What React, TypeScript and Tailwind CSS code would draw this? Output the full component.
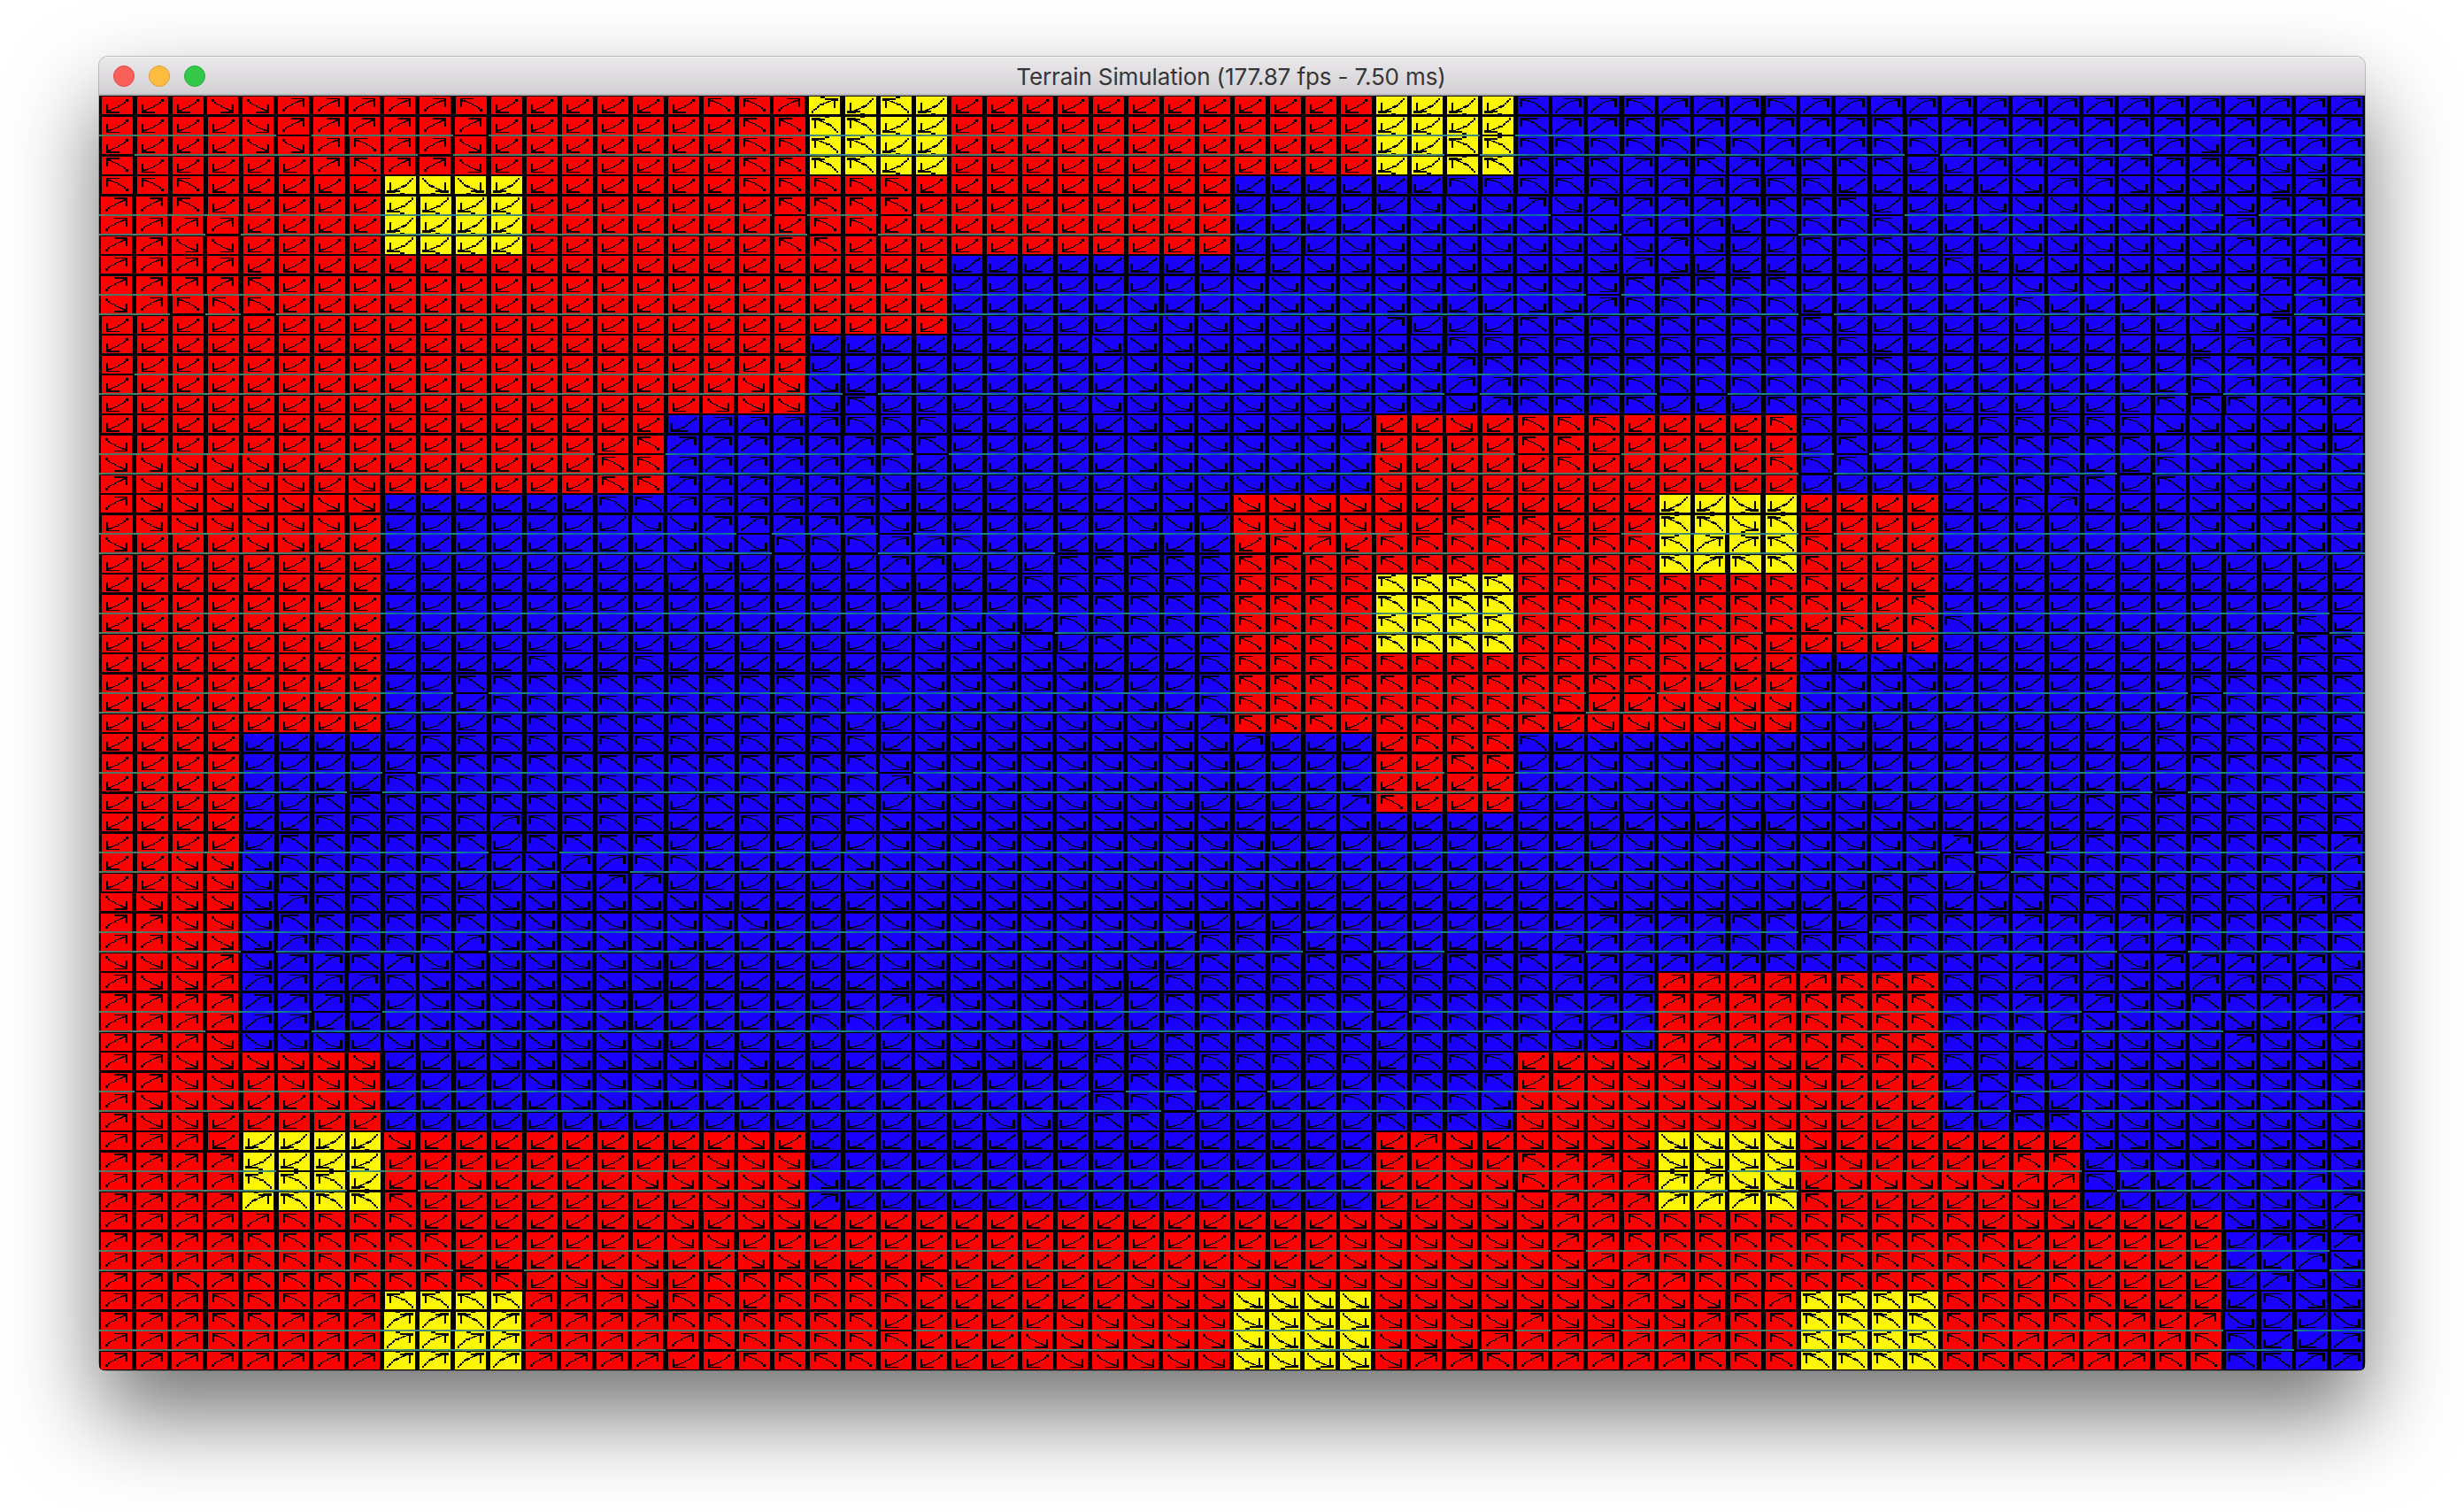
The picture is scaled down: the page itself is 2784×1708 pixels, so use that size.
import React from "react";

const CELL_W = 40;
const CELL_H = 22.5;

const TERRAIN = [
  "RRRRRYRRRYBBBBBB",
  "RRYRRRRRBBBBBBBB",
  "RRRRRRBBBBBBBBBB",
  "RRRRRBBBBBBBBBBB",
  "RRRRBBBBBRRRBBBB",
  "RRBBBBBBRRRYRBBB",
  "RRBBBBBBRYRRRBBB",
  "RRBBBBBBRRRRBBBB",
  "RBBBBBBBBRBBBBBB",
  "RBBBBBBBBBBBBBBB",
  "RBBBBBBBBBBBBBBB",
  "RBBBBBBBBBBRRBBB",
  "RRBBBBBBBBRRRBBB",
  "RYRRRBBBBRRYRRBB",
  "RRRRRRRRRRRRRRRB",
  "RRYRRRRRYRRRYRRB",
];

// Run-length flow directions: L down-left, R down-right, q up-left, p up-right.
const FLOW = [
  "3L2R5pq6L2q2pLqL8L 8Lq2pq3pq16p",
  "4LR6p7L4q10L 8Lq2p2q5p2q12p",
  "4L2Rpq2pR7L4q10L 6L9q3p2q7pR4p",
  "q5Lpq2pR7L4q10L 6L5q2pq2p3q2L8p2Rp",
  "3q6L2R7L5q9L 6L5q4p2q5LR2p5R2p",
  "2pq16L4q9L 5L3RpR5p3q3L8R3p",
  "4p16L2q10L 4L7R3pL4q3L6R4p",
  "2p2R15L2q11L 3L9RpR2L3q3L6R4p",
  "4p28L 2L9RpR7Lq2L6R3p",
  "4pq27L 11R5q6L7R3p",
  "Rp3q24LR2L 6R2L2Rp5q6Lq4L3R2p",
  "29L3R 4Rp3L9q10L2R3p",
  "28L4R 6R12q10L4p",
  "29L3R 6Rp12q8Lq4p",
  "18L3R8L3R 6R2p11q8Lq4p",
  "17L4Rq6L4R 7Rp4q3L4q7L3q3p",
  "17L4p3q5L3R 3R3LRL3q4L3q3L5q5RL",
  "R14Lq6p2q5L3R 4R4L2q7Lq3L5qL4RL",
  "5R9L2q6pq6L3R 5R4Lq5L3q3L3q2Lq5R",
  "p5RLR6L2q6pR6L3R 5R16L4qLq5R",
  "p7R6L2q6pR6L3R 5R9LR7Lqp3L5R",
  "L6R8L2R5pR6L2RL 5RL3q3L2qRq11L5R",
  "R3L2R10L3R3q2pq4LR2L LqpL9q2p2q10L5R",
  "16L2R4L2p3L5q 13qp3q15L",
  "22LR3L6q 17q15L",
  "26L6q 17q2Lq12L",
  "24L2RL5q 16qLqL2q9LqL",
  "23L4RL4q 15q15L2q",
  "12Lq2Lq7L5R3Lq 13q3LRL2R9L3q",
  "10L13q5R3Lq 12q4L4R7L5q",
  "11L11qL7RLq 10q2L7R8L5q",
  "11L10q2L8Rp 3qL5qL8R9L5q",
  "9L13qL9R p4L4qL8R8L6q",
  "9L13q10R 6L2q2L7R10L5q",
  "8L14qp9R 10L7R10L5q",
  "6L10qL5qL8RL 3Lpq5L8R6L8q",
  "6L5qp4q2L4q10R 3LR8LRLRL4R5L7q",
  "5L6qL4q6L10R R10L9Rp3L7qp",
  "2L3R5q2LR2p2q4L11R 2R9L9R11qp",
  "2L3R5q2L2R2p5L11R 2R8L8R2q2L8qpR",
  "5Rp5q7R4L10R 2R8L6R2L2qL2R6q3p",
  "2p3R6q8R3L9RL 10L4p2q2L3q6p5q",
  "2p3Rp4qp6R5L8RLq 2qLq5L5p7q6p5q",
  "3RpR2pqp7R6L8RLq 4q2L3q6p7q2p2R5pR",
  "p2R5pq7R6L7RL2q 9q8p5q3p2R2p3q",
  "7pqL6R7L2p4R2L2q 4qL5q6p6q3p2R2q3p",
  "6p3L6R5L2qp5R2L2q 3q2L4q7p7qp6R2p",
  "3p4RL8R7L4R3L2q 4qL4q3R4p7q5Rp3R",
  "2p6R3L8R4L3R2L4q 4qL3q2L2Rp3RL5qL9R",
  "2p2RL3R4L7R10L3q q3L4q2L7R4L2qL8R",
  "p3R2L2R5L3R12L3qL 3L4q10R5LqL8R",
  "p2R22L2RL2q2L 4L3q10R5L2q8R",
  "3p5LR9LR13L 5LpRL9R7L8R",
  "4p13L3R12L 6LRLq2p7R4L2qL7R",
  "4p3q3LR4L6R11L 6L2Rq5p2RL5R2pq3L2RpR",
  "5p4q8L3Rp11L 6L3R6p2q5LR5L3Rp",
  "5p4q7LRL2R12L 3L6R2p10qL2R4L3Rp",
  "4p6q6L2R14L 3L6R2p11q7L3p",
  "4p6q5LR2L2R12L R2L7R2p10q8LpR",
  "2pqp8qL3RL7q5L3R 11R2p9qLq5Lp2R",
  "3p3q2p4q3pR2qL4q6L3R 11Rp2Rqp9q4Lq2R",
  "3p2q5pqp4p6q5L5R 8Rp4Rp11qpLpR2LR",
  "3pq13p6q3L6R 7R7p8q5p2q2Lp",
  "16p2L4q5L5R 5R2pq5p10q3p4q2p",
];

// Columns whose lower contour is hidden, by row.
const GAPS: Record<number, number[]> = {
  1: [5, 10, 39], 2: [0, 9, 38, 51, 58, 59, 60], 5: [19, 22, 41, 42, 50, 60],
  6: [3, 20, 21, 43, 44, 45, 46, 47], 9: [42, 61], 10: [2, 4, 48, 61], 13: [0],
  14: [21, 38, 44, 45, 59], 17: [14, 15, 23, 40, 41, 42, 49], 18: [48, 57],
  21: [18, 22, 37, 41, 42, 48], 22: [19, 20, 21, 27, 28, 29, 30, 31, 32, 33],
  25: [63], 26: [26, 47, 48, 62], 29: [10, 42, 43, 59], 30: [41],
  33: [8, 22, 38, 39], 34: [0, 7, 58], 37: [11, 12, 52, 54], 38: [13, 14, 53],
  41: [31, 32, 33, 48, 49], 42: [4, 10, 34, 35, 38, 39, 40, 41, 57, 58],
  45: [6, 7, 36, 56], 46: [3, 4, 5, 41, 42, 55, 60, 61, 62, 63],
  49: [1, 28, 31, 32, 53], 50: [30, 54, 55], 53: [5, 6, 43, 44, 45, 56],
  54: [7, 8, 40, 46, 48, 54, 55, 56], 57: [41, 63],
  58: [10, 11, 18, 19, 20, 21, 22, 23, 42, 62], 61: [22, 39, 41, 42, 60, 61],
  62: [16, 17, 37, 38, 62, 63],
};

type Box = [number, number, number, number];

// Down-left arrows in a 35x20 tile; the other directions are mirrored from these.
const ARROWS: Record<string, { thick: Box[]; thin: Box[] }> = {
  R: {
    thick: [[27, 3, 3, 3], [25, 6, 2, 2], [23, 8, 2, 1], [20, 9, 3, 1], [18, 10, 2, 2], [15, 12, 3, 1], [12, 13, 3, 1], [10, 14, 3, 1], [7, 15, 4, 1], [5, 9, 2, 8], [5, 16, 5, 1], [5, 17, 15, 2]],
    thin: [[27, 3, 3, 3], [25, 6, 2, 2], [23, 8, 2, 1], [20, 9, 3, 1], [18, 10, 2, 2], [15, 12, 3, 1], [12, 13, 3, 1], [9, 14, 4, 1], [5, 8, 2, 9], [7, 15, 4, 1], [7, 16, 1, 1], [5, 14, 3, 3], [5, 17, 15, 1]],
  },
  Y: {
    thick: [[30, 2, 2, 2], [28, 4, 2, 2], [27, 5, 2, 2], [25, 7, 2, 2], [23, 9, 2, 2], [20, 10, 4, 2], [18, 11, 4, 2], [15, 13, 3, 1], [12, 14, 4, 1], [10, 15, 4, 1], [5, 7, 2, 9], [2, 16, 15, 2], [2, 18, 10, 1], [17, 19, 5, 1]],
    thin: [[30, 1, 2, 3], [28, 4, 2, 2], [26, 5, 2, 2], [24, 7, 2, 2], [23, 8, 2, 2], [18, 10, 5, 2], [15, 12, 4, 1], [12, 13, 4, 1], [10, 14, 4, 1], [5, 7, 2, 8], [2, 15, 8, 3], [2, 16, 15, 2], [17, 18, 5, 2]],
  },
  B: {
    thick: [[30, 2, 2, 3], [28, 4, 2, 2], [26, 5, 2, 2], [24, 7, 2, 2], [22, 8, 2, 2], [20, 10, 2, 2], [18, 12, 2, 1], [15, 13, 3, 2], [11, 15, 4, 1], [5, 16, 7, 1], [2, 9, 3, 8], [2, 17, 20, 2]],
    thin: [[30, 1, 2, 3], [28, 4, 2, 2], [26, 5, 2, 2], [24, 7, 2, 2], [22, 8, 2, 2], [20, 10, 2, 2], [18, 12, 2, 1], [15, 13, 3, 1], [11, 14, 4, 1], [5, 15, 7, 1], [4, 16, 4, 1], [2, 8, 3, 10], [2, 17, 20, 1]],
  },
};

const FILL: Record<string, string> = { R: "#ff0000", Y: "#fff800", B: "#1a00ff" };

function expand(row: string): string {
  return row.replace(/ /g, "").replace(/(\d*)([LRqp])/g, (_, n: string, c: string) => c.repeat(n ? Number(n) : 1));
}

function rect(x: number, y: number, w: number, h: number): string {
  return `M${x} ${y}h${w}v${h}h${-w}z`;
}

function buildField() {
  const tiles: Record<string, string> = { R: "", Y: "", B: "" };
  const lines: { x: number; y: number; kind: string }[] = [];
  let arrows = "";
  FLOW.forEach((packed, r) => {
    const row = expand(packed);
    const y = Math.round(r * CELL_H) + 1;
    for (let c = 0; c < 64; c++) {
      const dir = row[c];
      const kind = TERRAIN[r >> 2][c >> 2];
      const right = dir === "R" || dir === "p";
      const up = dir === "q" || dir === "p";
      const x = c * CELL_W + (right ? 2 : 3);
      tiles[kind] += rect(x, y, 35, 20);
      const thick = (r % 2 === 0) !== up;
      for (const [bx, by, w, h] of ARROWS[kind][thick ? "thick" : "thin"]) {
        arrows += rect(x + (right ? 35 - bx - w : bx), y + (up ? 20 - by - h : by), w, h);
      }
      if ((r % 4 === 1 || r % 4 === 2) && !(GAPS[r] || []).includes(c)) {
        lines.push({ x: c * CELL_W, y: y + 20, kind });
      }
    }
  });
  return { tiles, arrows, lines };
}

const FIELD = buildField();

function TerrainField() {
  return (
    <svg width="2560" height="1440" viewBox="0 0 2560 1440" shapeRendering="crispEdges" className="block bg-black">
      <defs>
        <linearGradient id="lineR">
          <stop offset="0" stopColor="#4c8464" />
          <stop offset="0.5" stopColor="#5c6c64" />
          <stop offset="1" stopColor="#3c806c" />
        </linearGradient>
        <linearGradient id="lineY">
          <stop offset="0" stopColor="#34808c" />
          <stop offset="0.5" stopColor="#5ca058" />
          <stop offset="1" stopColor="#34808c" />
        </linearGradient>
        <linearGradient id="lineB">
          <stop offset="0" stopColor="#1c8480" />
          <stop offset="0.25" stopColor="#147c8c" />
          <stop offset="0.5" stopColor="#0c5cac" />
          <stop offset="0.75" stopColor="#107898" />
          <stop offset="1" stopColor="#148484" />
        </linearGradient>
      </defs>
      {Object.entries(FIELD.tiles).map(([kind, d]) => (
        <path key={kind} d={d} fill={FILL[kind]} />
      ))}
      <path d={FIELD.arrows} fill="#000000" />
      {FIELD.lines.map((l) => (
        <rect key={`${l.x}-${l.y}`} x={l.x} y={l.y} width="40" height="2" fill={`url(#line${l.kind})`} />
      ))}
    </svg>
  );
}

function TitleBar() {
  return (
    <header className="relative flex h-[44px] items-center justify-center border-b-2 border-[#b4b2b4] bg-linear-to-b from-[#ebe9eb] to-[#d2d0d2] shadow-[inset_0_1px_0_#f6f5f6]">
      <div className="absolute top-[10px] left-4 flex gap-4">
        <span className="size-6 rounded-full border border-[#e2443f] bg-[#fc605b]" />
        <span className="size-6 rounded-full border border-[#dfa033] bg-[#fdbc40]" />
        <span className="size-6 rounded-full border border-[#24a93a] bg-[#34c84a]" />
      </div>
      <h1 className="pt-[3px] pr-[2px] text-[26px] leading-none tracking-[-0.12px] whitespace-nowrap text-[#363538]">
        Terrain Simulation (177.87 fps - 7.50 ms)
      </h1>
    </header>
  );
}

export default function App() {
  return (
    <main className="h-[1708px] w-[2784px] overflow-hidden bg-white px-28 pt-16 font-['Inter',sans-serif]">
      <div className="w-[2560px] rounded-[10px] shadow-[0_0_0_1px_rgba(0,0,0,0.22),0_50px_100px_rgba(0,0,0,0.55)]">
        <div className="overflow-hidden rounded-t-[10px] rounded-b-[5px]">
          <TitleBar />
          <TerrainField />
        </div>
      </div>
    </main>
  );
}
